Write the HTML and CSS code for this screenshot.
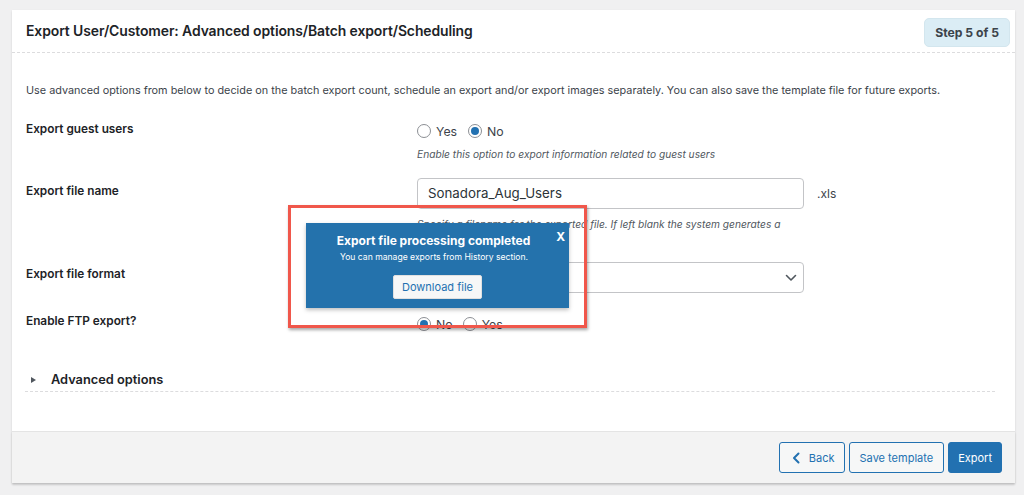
FILE: index.html
```html
<!DOCTYPE html>
<html>
<head>
<meta charset="utf-8">
<link rel="stylesheet" href="styles.css">
</head>
<body>
<div class="card">
  <div class="card-head">
    <h2 class="title">Export User/Customer: Advanced options/Batch export/Scheduling</h2>
    <span class="step">Step 5 of 5</span>
  </div>
  <div class="card-body">
    <p class="intro">Use advanced options from below to decide on the batch export count, schedule an export and/or export images separately. You can also save the template file for future exports.</p>
    <div class="form">
      <div class="row row-guest">
        <div class="label">Export guest users</div>
        <div class="field">
          <div class="radios">
            <span class="radio"></span><span class="rlabel">Yes</span>
            <span class="radio checked"></span><span class="rlabel">No</span>
          </div>
          <div class="hint">Enable this option to export information related to guest users</div>
        </div>
      </div>
      <div class="row row-name">
        <div class="label">Export file name</div>
        <div class="field">
          <div class="input-line">
            <div class="input">Sonadora_Aug_Users</div>
            <span class="ext">.xls</span>
          </div>
          <div class="hint hint-name">Specify a filename for the exported file. If left blank the system generates a default name.</div>
        </div>
      </div>
      <div class="row row-format">
        <div class="label">Export file format</div>
        <div class="field">
          <div class="select">
            <span class="sel-text">xls</span>
            <svg class="chev" width="12" height="8" viewBox="0 0 12 8"><path d="M1.5 1.5 L6 6 L10.5 1.5" fill="none" stroke="#50575e" stroke-width="1.6" stroke-linecap="round" stroke-linejoin="round"/></svg>
          </div>
        </div>
      </div>
      <div class="row row-ftp">
        <div class="label">Enable FTP export?</div>
        <div class="field">
          <div class="radios">
            <span class="radio checked"></span><span class="rlabel">No</span>
            <span class="radio"></span><span class="rlabel">Yes</span>
          </div>
        </div>
      </div>
    </div>
    <div class="advanced">
      <span class="tri"></span>
      <span class="adv-text">Advanced options</span>
    </div>
  </div>
  <div class="card-foot">
    <button class="btn btn-sec btn-back"><svg width="9" height="12" viewBox="0 0 9 12"><path d="M6.5 1.5 L2 6 L6.5 10.5" fill="none" stroke="#2271b1" stroke-width="2" stroke-linecap="round" stroke-linejoin="round"/></svg>Back</button>
    <button class="btn btn-sec">Save template</button>
    <button class="btn btn-pri">Export</button>
  </div>
</div>

<div class="highlight">
  <div class="popup">
    <span class="close">X</span>
    <div class="pop-title">Export file processing completed</div>
    <div class="pop-sub">You can manage exports from History section.</div>
    <button class="pop-btn">Download file</button>
  </div>
</div>
</body>
</html>
```

FILE: styles.css
```css
* { box-sizing: border-box; }
html, body { margin: 0; padding: 0; }
body {
  background: #f0f0f1;
  font-family: "Inter", "Liberation Sans", sans-serif;
  color: #1d2327;
  width: 1024px;
  height: 495px;
  overflow: hidden;
  position: relative;
  padding: 10px 9px 0 12px;
}
.card {
  background: #fff;
  box-shadow: 0 1px 2px rgba(0,0,0,0.12);
}
.card-head {
  height: 43px;
  display: flex;
  align-items: center;
  justify-content: space-between;
  padding: 0 5px 0 14px;
  border-bottom: 1px dashed #dcdcde;
}
.title {
  margin: 0;
  font-size: 13.95px;
  font-weight: 600;
  color: #1d2327;
  letter-spacing: -0.1px;
  position: relative;
  top: -1px;
}
.step {
  background: #dbedf5;
  border: 1px solid #d3e6ee;
  border-radius: 5px;
  font-size: 12.2px;
  font-weight: 700;
  color: #3c434a;
  padding: 6px 10px;
  line-height: 15px;
  position: relative;
  top: 1px;
}
.card-body {
  padding: 0 20px 0 14px;
  height: 378px;
}
.intro {
  margin: 0;
  padding-top: 29px;
  font-size: 10.85px;
  line-height: 16px;
  color: #3c434a;
  white-space: nowrap;
}
.form { margin-top: 16px; }
.row {
  display: grid;
  grid-template-columns: 391px 1fr;
}
.label {
  font-size: 11.8px;
  font-weight: 600;
  color: #1d2327;
  line-height: 16px;
}
.row-guest { height: 62px; }
.row-guest .label { padding-top: 7px; }
.radios {
  display: flex;
  align-items: center;
  height: 16px;
  margin-top: 9px;
}
.radio {
  width: 14px;
  height: 14px;
  border: 1px solid #8c8f94;
  border-radius: 50%;
  background: #fff;
  display: inline-flex;
  align-items: center;
  justify-content: center;
  flex: none;
}
.radio.checked::after {
  content: "";
  width: 8px;
  height: 8px;
  border-radius: 50%;
  background: #2271b1;
}
.rlabel {
  font-size: 12.3px;
  color: #3c434a;
  margin: 0 11px 0 5px;
}
.hint {
  font-size: 10.2px;
  font-style: italic;
  color: #50575e;
  margin-top: 8px;
  line-height: 14px;
}
.row-name { height: 83px; }
.row-name .label { padding-top: 7px; }
.input-line {
  display: flex;
  align-items: center;
  margin-top: 2px;
}
.input {
  width: 387px;
  height: 31px;
  border: 1px solid #c3c4c7;
  border-radius: 4px;
  font-size: 13.3px;
  color: #2c3338;
  padding: 0 10px;
  line-height: 29px;
}
.ext {
  font-size: 12px;
  color: #3c434a;
  margin-left: 13px;
}
.hint-name {
  width: 370px;
  margin-top: 8px;
}
.row-format { height: 47px; }
.row-format .label { padding-top: 7px; }
.select {
  width: 387px;
  height: 31px;
  border: 1px solid #c3c4c7;
  border-radius: 4px;
  display: flex;
  align-items: center;
  justify-content: space-between;
  padding: 0 6px 0 10px;
  font-size: 13px;
  color: #2c3338;
  margin-top: 3px;
}
.row-ftp .label { padding-top: 7px; }
.row-ftp .radios { margin-top: 10px; }
.row-ftp .rlabel { margin-right: 10px; }
.advanced {
  margin: 36px 0 0 -1px;
  height: 24px;
  display: flex;
  align-items: center;
  border-bottom: 1px dashed #dcdcde;
}
.tri {
  width: 0; height: 0;
  border-left: 5px solid #50575e;
  border-top: 3.5px solid transparent;
  border-bottom: 3.5px solid transparent;
  margin: 0 15px 0 6px;
}
.adv-text {
  font-size: 12.8px;
  font-weight: 600;
  color: #1d2327;
}
.card-foot {
  background: #f3f3f3;
  border-top: 1px solid #e4e4e4;
  height: 52px;
  display: flex;
  justify-content: flex-end;
  align-items: center;
  gap: 4px;
  padding-right: 13px;
  box-shadow: 0 2px 2px rgba(0,0,0,0.12);
}
.btn {
  height: 31px;
  border-radius: 3px;
  font-family: inherit;
  font-size: 11px;
  padding: 0 10px;
  display: inline-flex;
  align-items: center;
  cursor: pointer;
}
.btn svg { margin-right: 8px; }
.btn-sec {
  background: #f6f7f7;
  border: 1px solid #2271b1;
  color: #2271b1;
}
.btn-back { padding: 0 9px 0 12px; }
.btn-pri {
  background: #2271b1;
  border: 1px solid #2271b1;
  color: #fff;
  padding: 0 9px;
}
.highlight {
  position: absolute;
  left: 288px;
  top: 205px;
  width: 299px;
  height: 123px;
  border: 3px solid #f0574b;
  box-shadow: 1px 2px 3px rgba(0,0,0,0.35);
  padding: 15px 0 0 15px;
}
.popup {
  width: 263px;
  height: 85px;
  background: #2472ac;
  box-shadow: 0 2px 4px rgba(0,0,0,0.25);
  color: #fff;
  text-align: center;
  position: relative;
  padding-top: 10px;
}
.close {
  position: absolute;
  right: 4px;
  top: 6px;
  font-size: 12px;
  font-weight: 700;
}
.pop-title {
  font-size: 12px;
  font-weight: 700;
  line-height: 16px;
  padding-right: 8px;
}
.pop-sub {
  font-size: 8.6px;
  line-height: 12px;
  margin-top: 2px;
  padding-right: 7px;
}
.pop-btn {
  margin-top: 12px;
  background: #f6f7f7;
  border: 1px solid #e0e0e0;
  border-radius: 2px;
  color: #2271b1;
  font-family: inherit;
  font-size: 11px;
  height: 24px;
  padding: 0 8px;
}
```
